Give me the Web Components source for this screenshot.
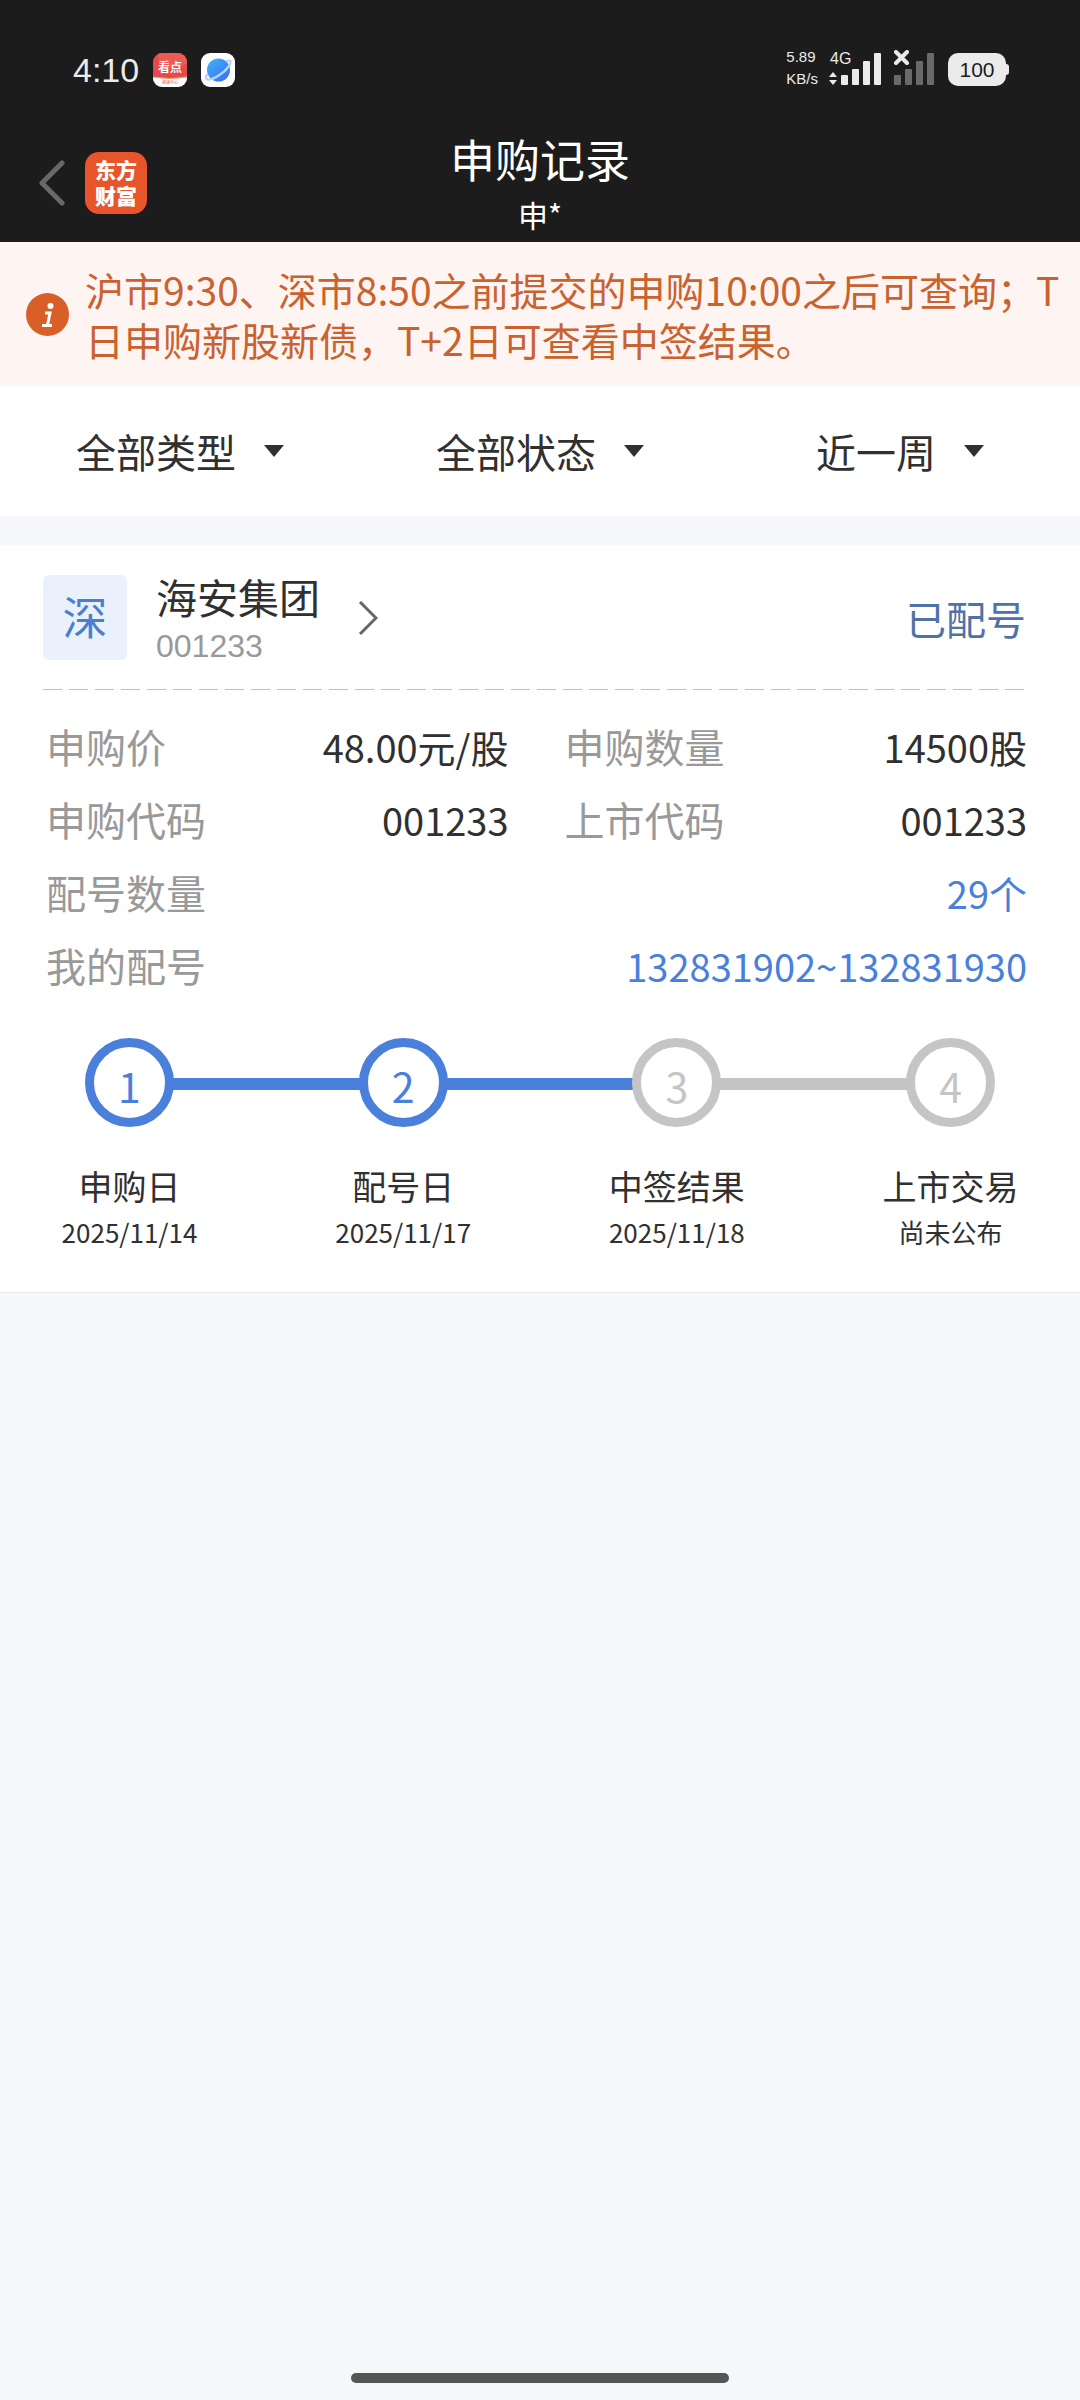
<!DOCTYPE html>
<html lang="zh-CN">
<head>
<meta charset="utf-8">
<meta name="viewport" content="width=device-width, initial-scale=1">
<title>申购记录</title>
<style>
  body {
    margin: 0;
    min-height: 100vh;
    display: flex;
    flex-direction: column;
    background: #f6f7fa;
    color: #303030;
    font-family: "Noto Sans CJK SC", "Noto Sans", sans-serif;
    --dark: #1c1c1c;
    --blue: #4a7fdb;
    --grey: #999999;
    --idle: #c5c5c5;
    --compact: "Liberation Sans", "Noto Sans CJK SC", sans-serif;
  }
</style>
</head>
<body>
<status-bar time="4:10" speed="5.89" network="4G" battery="100"></status-bar>
<nav-bar subtitle="申*">申购记录</nav-bar>
<notice-bar>沪市9:30、深市8:50之前提交的申购10:00之后可查询；T日申购新股新债，T+2日可查看中签结果。</notice-bar>
<filter-bar>
  <filter-item label="类型">全部类型</filter-item>
  <filter-item label="状态">全部状态</filter-item>
  <filter-item label="时间">近一周</filter-item>
</filter-bar>
<record-card market="深" name="海安集团" code="001233" status="已配号">
  <record-field label="申购价">48.00元/股</record-field>
  <record-field label="申购数量">14500股</record-field>
  <record-field label="申购代码">001233</record-field>
  <record-field label="上市代码">001233</record-field>
  <record-field label="配号数量" wide>29个</record-field>
  <record-field label="我的配号" wide>132831902~132831930</record-field>
  <step-list slot="steps">
    <step-item number="1" label="申购日" done>2025/11/14</step-item>
    <step-item number="2" label="配号日" done>2025/11/17</step-item>
    <step-item number="3" label="中签结果">2025/11/18</step-item>
    <step-item number="4" label="上市交易">尚未公布</step-item>
  </step-list>
</record-card>
<home-indicator></home-indicator>

<script>
// clona el markup en un shadow root abierto
const render = (element, html) => {
  const template = document.createElement("template")
  template.innerHTML = html
  element.attachShadow({ mode: "open" })
  element.shadowRoot.appendChild(template.content.cloneNode(true))
}

class StatusBar extends HTMLElement {
  connectedCallback() {
    render(this, `
<style>
  :host {
    display: flex;
    align-items: center;
    justify-content: space-between;
    padding: 48px 70px 39px 73px;
    height: 44px;
    background: var(--dark);
    color: #ebebeb;
    font-family: var(--compact);
  }
  div { display: flex; align-items: center; }
  .left { gap: 14px; }
  .time { font-size: 34px; line-height: 44px; }
  .right { gap: 11px; }
  .right .speed { display: block; padding-bottom: 4px; font-size: 15px; line-height: 22px; }
  .speed span { display: block; }
  svg { display: block; }
</style>
<div class="left">
  <span class="time">${this.getAttribute("time")}</span>
  <svg width="34" height="34" viewBox="0 0 34 34">
    <defs><clipPath id="round"><rect width="34" height="34" rx="9"/></clipPath></defs>
    <g clip-path="url(#round)">
      <rect width="34" height="34" fill="#e5484d"/>
      <path d="M5 0Q4 9 13 14Q22 19 34 10V0Z" fill="#ee5a56"/>
      <path d="M0 24Q17 27 34 24V34H0Z" fill="#fff"/>
      <path d="M0 24Q17 27 34 24" fill="none" stroke="#f7a04a"/>
    </g>
    <text x="17" y="19" font-size="12" font-weight="700" fill="#fff" text-anchor="middle">看点</text>
    <text x="17" y="31" font-size="4" fill="#d8444a" text-anchor="middle">阅读中心</text>
  </svg>
  <svg width="34" height="34" viewBox="0 0 34 34">
    <defs>
      <linearGradient id="planet" x1="0" y1="0" x2="1" y2="1">
        <stop offset="0" stop-color="#45b4fb"/><stop offset="1" stop-color="#2f6df0"/>
      </linearGradient>
    </defs>
    <rect width="34" height="34" rx="9" fill="#fff"/>
    <circle cx="17.500" cy="17" r="11.500" fill="url(#planet)"/>
    <path d="M25 8.500Q31 6 29 11C26 18 13 27 7 26.500Q3 26 6.500 21" fill="none" stroke="#b9d1fb" stroke-width="2.400"/>
  </svg>
</div>
<div class="right">
  <div class="speed"><span>${this.getAttribute("speed")}</span><span>KB/s</span></div>
  <svg width="53" height="40" viewBox="0 3 53 40" fill="#ebebeb">
    <text x="1" y="17" font-size="16">${this.getAttribute("network")}</text>
    <path d="M4 25L8 30H0ZM4 38L8 33H0Z"/>
    <rect x="12" y="28" width="7" height="10" rx="1"/>
    <rect x="23" y="22" width="7" height="16" rx="1"/>
    <rect x="34" y="14" width="7" height="24" rx="1"/>
    <rect x="45" y="6" width="7" height="32" rx="1"/>
  </svg>
  <svg width="44" height="40" viewBox="0 3 44 40" fill="#6a6a6a">
    <path d="M3 5L14 16M14 5L3 16" stroke="#ebebeb" stroke-width="4" stroke-linecap="round"/>
    <rect x="1" y="28" width="7" height="10" rx="1"/>
    <rect x="12" y="22" width="7" height="16" rx="1"/>
    <rect x="23" y="14" width="7" height="24" rx="1"/>
    <rect x="34" y="6" width="7" height="32" rx="1"/>
  </svg>
  <svg width="62" height="34" viewBox="0 0 62 34">
    <rect width="58" height="33" rx="10" fill="#ebebeb"/>
    <rect x="54" y="11" width="7" height="11" rx="3" fill="#ebebeb"/>
    <text x="29" y="24" font-size="21" fill="#1c1c1c" text-anchor="middle">${this.getAttribute("battery")}</text>
  </svg>
</div>
`)
  }
}

class NavBar extends HTMLElement {
  connectedCallback() {
    render(this, `
<style>
  :host {
    display: grid;
    grid-template-columns: 1fr auto 1fr;
    align-items: center;
    padding: 0 39px 7px;
    background: var(--dark);
    color: #fff;
  }
  .left { display: flex; align-items: center; gap: 20px; }
  button {
    display: block;
    padding: 0;
    border: 0;
    background: none;
  }
  svg { display: block; }
  .logo {
    width: 62px;
    height: 62px;
    box-sizing: border-box;
    padding: 6px 0;
    border-radius: 14px;
    background: #e8552b;
    color: #fff;
    font-family: var(--compact);
    font-size: 21px;
    font-weight: 900;
    line-height: 26px;
    text-align: center;
  }
  .title { text-align: center; }
  h1 { margin: 0; font-size: 45px; font-weight: 400; line-height: 56px; }
  p { margin: 10px 0 0; font-size: 30px; line-height: 34px; padding-bottom: 4px; }
</style>
<div class="left">
  <button aria-label="返回">
    <svg width="26" height="46" viewBox="0 0 26 46" fill="none" stroke="#686868" stroke-width="5" stroke-linecap="round" stroke-linejoin="round">
      <path d="M23 3L3 23L23 43"/>
    </svg>
  </button>
  <div class="logo">东方<br>财富</div>
</div>
<div class="title">
  <h1><slot></slot></h1>
  <p>${this.getAttribute("subtitle")}</p>
</div>
`)
  }
}

class NoticeBar extends HTMLElement {
  connectedCallback() {
    render(this, `
<style>
  :host {
    display: flex;
    align-items: center;
    gap: 16px;
    padding: 22px 12px 22px 26px;
    background: #fef4f1;
    color: #c9622f;
    font-size: 39px;
    line-height: 50px;
  }
  svg { flex: none; }
  p { margin: 0; }
</style>
<svg width="43" height="43" viewBox="0 0 43 43">
  <circle cx="21.5" cy="21.5" r="21.5" fill="#d95f28"/>
  <circle cx="24.500" cy="13" r="3" fill="#fff"/>
  <path d="M19 20H24L21.500 32M16 32.500H26" fill="none" stroke="#fff" stroke-width="3"/>
</svg>
<p><slot></slot></p>
`)
  }
}

class FilterBar extends HTMLElement {
  connectedCallback() {
    render(this, `
<style>
  :host {
    display: grid;
    grid-template-columns: repeat(3, 1fr);
    margin-bottom: 29px;
    background: #fff;
  }
</style>
<slot></slot>
`)
  }
}

class FilterItem extends HTMLElement {
  connectedCallback() {
    render(this, `
<style>
  :host { display: flex; justify-content: center; }
  label { display: flex; align-items: center; gap: 28px; height: 130px; }
  select {
    appearance: none;
    margin: 0;
    padding: 0;
    border: 0;
    background: none;
    color: inherit;
    font: inherit;
    font-size: 40px;
    line-height: 60px;
  }
  svg { pointer-events: none; }
</style>
<label>
  <select aria-label="${this.getAttribute("label")}"><option>${this.textContent}</option></select>
  <svg width="20" height="12" viewBox="0 0 20 12" fill="#303030"><path d="M0 0H20L10 12Z"/></svg>
</label>
`)
  }
}

class RecordCard extends HTMLElement {
  connectedCallback() {
    render(this, `
<style>
  :host {
    display: block;
    padding: 30px 0 42px;
    border-bottom: 1px solid #e9eaed;
    background: #fff;
  }
  header {
    display: flex;
    align-items: center;
    margin: 0 54px 0 43px;
    padding-bottom: 22px;
  }
  .market, button, .status { margin-bottom: 7px; }
  .market {
    width: 84px;
    height: 85px;
    margin-right: 29px;
    border-radius: 6px;
    background: #ebf1fc;
    color: #4a7fd0;
    font-size: 45px;
    line-height: 82px;
    text-align: center;
  }
  .name { font-family: var(--compact); }
  h2 { margin: 0; font-size: 41px; font-weight: 400; line-height: 50px; }
  .code { margin: 0; color: var(--grey); font-size: 32px; line-height: 42px; }
  button { margin-left: 38px; margin-right: auto; padding: 0; border: 0; background: none; }
  button svg { display: block; }
  .status { color: #4f72a8; font-size: 40px; line-height: 50px; }
  .dash {
    height: 1px;
    margin: 0 51px 0 43px;
    background: repeating-linear-gradient(90deg, #c0c0c0 0 19px, transparent 19px 26px);
  }
  .fields {
    display: grid;
    grid-template-columns: 1fr 1fr;
    column-gap: 56px;
    margin: 20px 53px 36px 46px;
  }
</style>
<header>
  <div class="market">${this.getAttribute("market")}</div>
  <div class="name">
    <h2>${this.getAttribute("name")}</h2>
    <p class="code">${this.getAttribute("code")}</p>
  </div>
  <button aria-label="详情">
    <svg width="20" height="34" viewBox="0 0 20 34" fill="none" stroke="#666" stroke-width="3"><path d="M2 1L18 17L2 33"/></svg>
  </button>
  <span class="status">${this.getAttribute("status")}</span>
</header>
<div class="dash"></div>
<div class="fields"><slot></slot></div>
<slot name="steps"></slot>
`)
  }
}

class RecordField extends HTMLElement {
  connectedCallback() {
    render(this, `
<style>
  :host { display: block; }
  :host([wide]) { grid-column: 1 / -1; }
  dl {
    display: flex;
    justify-content: space-between;
    margin: 0;
    line-height: 73px;
    white-space: nowrap;
  }
  dt { color: var(--grey); font-size: 40px; }
  dd { margin: 0; font-size: 38px; }
  :host([wide]) dd { color: var(--blue); }
</style>
<dl><dt>${this.getAttribute("label")}</dt><dd><slot></slot></dd></dl>
`)
  }
}

class StepList extends HTMLElement {
  connectedCallback() {
    render(this, `
<style>
  :host { display: flex; padding: 0 85px; }
</style>
<slot></slot>
`)
  }
}

class StepItem extends HTMLElement {
  connectedCallback() {
    render(this, `
<style>
  :host { display: flex; flex: 1; --tone: var(--idle); }
  :host([done]) { --tone: var(--blue); }
  :host(:last-child) { flex: none; }
  .step {
    display: flex;
    flex: none;
    flex-direction: column;
    align-items: center;
    width: 89px;
    white-space: nowrap;
  }
  .circle {
    box-sizing: border-box;
    width: 89px;
    height: 89px;
    border: 9px solid var(--tone);
    border-radius: 50%;
    color: var(--tone);
    font-size: 41px;
    line-height: 76px;
    text-align: center;
  }
  .label { margin-top: 37px; font-size: 34px; line-height: 44px; }
  .date { margin-top: 6px; font-size: 26px; line-height: 36px; }
  .line { flex: 1; height: 12px; margin: 40px -1px 0; background: var(--tone); }
  :host(:last-child) .line { display: none; }
</style>
<div class="step">
  <div class="circle">${this.getAttribute("number")}</div>
  <div class="label">${this.getAttribute("label")}</div>
  <div class="date"><slot></slot></div>
</div>
<div class="line"></div>
`)
  }
}

class HomeIndicator extends HTMLElement {
  connectedCallback() {
    render(this, `
<style>
  :host { display: block; margin-top: auto; padding: 17px 0; }
  div { width: 35%; height: 10px; margin: 0 auto; border-radius: 5px; background: #555756; }
</style>
<div></div>
`)
  }
}

window.customElements.define("status-bar", StatusBar)
window.customElements.define("nav-bar", NavBar)
window.customElements.define("notice-bar", NoticeBar)
window.customElements.define("filter-bar", FilterBar)
window.customElements.define("filter-item", FilterItem)
window.customElements.define("record-card", RecordCard)
window.customElements.define("record-field", RecordField)
window.customElements.define("step-list", StepList)
window.customElements.define("step-item", StepItem)
window.customElements.define("home-indicator", HomeIndicator)
</script>
</body>
</html>
